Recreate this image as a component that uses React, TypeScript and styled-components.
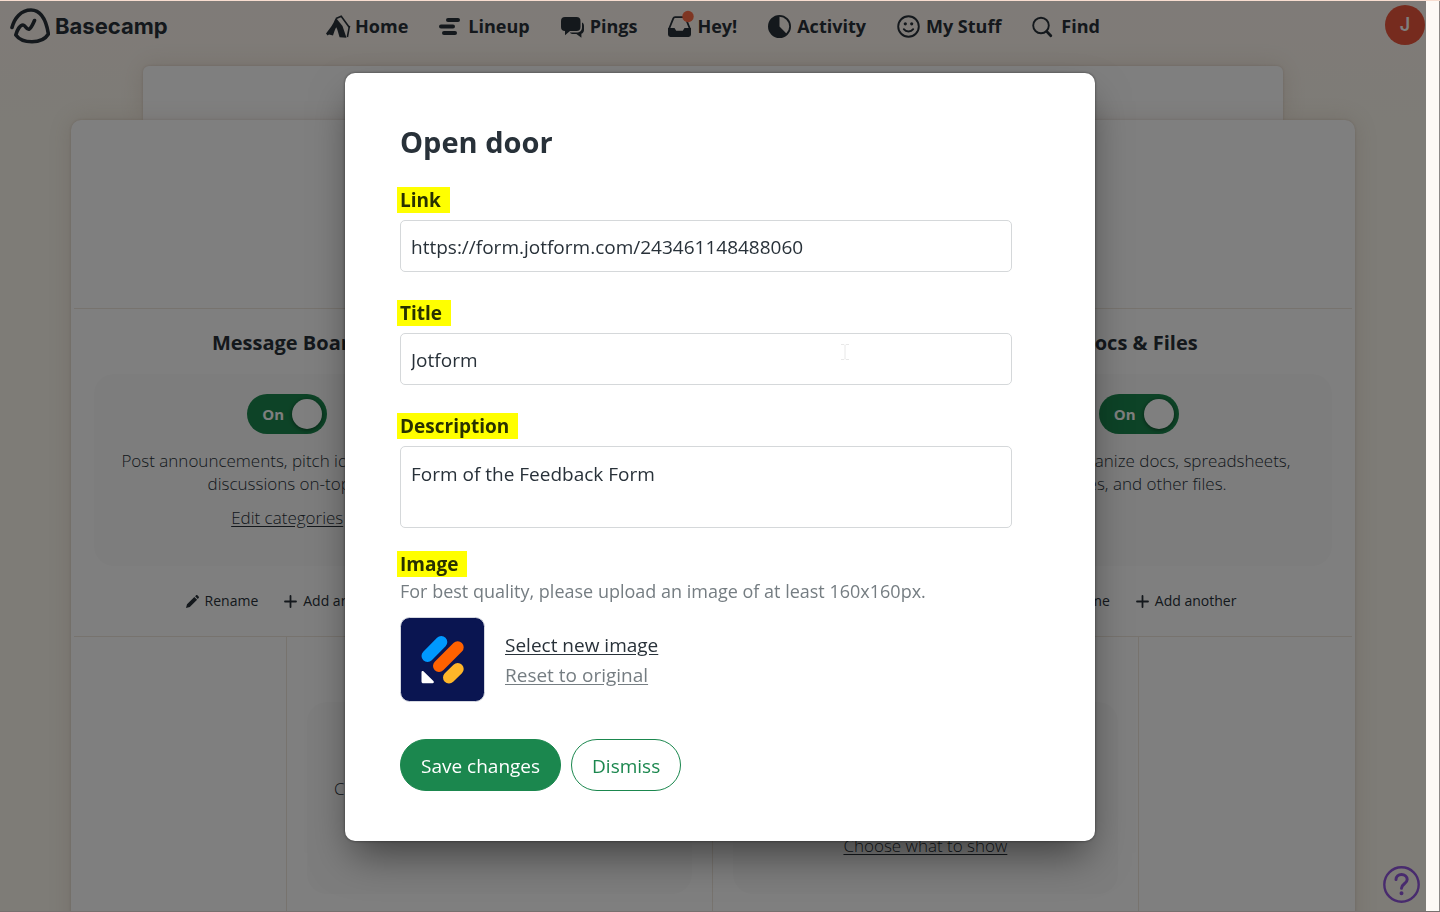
import React from "react";
import styled, { createGlobalStyle } from "styled-components";

const ink = "#283139";
const green = "#1b874e";
const rule = "#efe6dc";

const GlobalStyle = createGlobalStyle`
  *, *::before, *::after { box-sizing: border-box; }
  body {
    margin: 0;
    color: ${ink};
    font-family: "Open Sans", "Noto Sans", sans-serif;
  }
  button, input, textarea { font-family: inherit; color: inherit; }
  h1, h2, p { margin: 0; }
`;

const Shell = styled.div`
  display: grid;
  grid-template-columns: minmax(0, 1fr) 14px;
  height: 100vh;
  overflow: hidden;
  border-top: 1px solid #f8ddd0;
  border-bottom: 1px solid #77706f;
`;

const Gutter = styled.div`
  background: #fdf9f5;
  border-right: 1px solid #8c8886;
`;

const Page = styled.div`
  position: relative;
  display: flex;
  flex-direction: column;
  min-height: 0;
  overflow: hidden;
  background: linear-gradient(#fff6f0 0, #fcf8ee 120px);
`;

const Dim = styled.div`
  position: absolute;
  inset: 0;
  background: rgba(0, 0, 0, 0.5);
`;

const Header = styled.header`
  display: grid;
  grid-template-columns: 1fr auto 1fr;
  align-items: center;
  flex: none;
  height: 50px;
  padding: 0 1px;
`;

const Brand = styled.a`
  display: flex;
  align-items: center;
  gap: 5px;
  padding-left: 9px;
  color: inherit;
  font: 700 22px/28px Inter, sans-serif;
  text-decoration: none;
`;

const Nav = styled.nav`
  display: flex;
  gap: 31px;
`;

const NavLink = styled.a`
  display: flex;
  align-items: center;
  gap: 6px;
  color: inherit;
  font-size: 18px;
  font-weight: 700;
  line-height: 24px;
  text-decoration: none;
  svg { overflow: visible; }
`;

const Avatar = styled.button`
  justify-self: end;
  width: 40px;
  height: 40px;
  margin-bottom: 2px;
  padding: 0;
  border: 0;
  border-radius: 50%;
  background: #ed563c;
  color: #fff;
  font: 600 18px/40px Inter, sans-serif;
`;

const BackSheet = styled.div`
  flex: none;
  width: 80%;
  height: 54px;
  margin: 15px auto 0;
  border-radius: 6px 6px 0 0;
  background: #fff;
  box-shadow: 0 0 24px rgba(120, 80, 50, 0.14), 0 0 3px rgba(120, 80, 50, 0.2);
`;

const Sheet = styled.main`
  position: relative;
  flex: 1;
  width: 90%;
  margin: 0 auto;
  padding: 188px 3px 0;
  border-radius: 10px 10px 0 0;
  background: #fff;
  box-shadow: 0 0 24px rgba(120, 80, 50, 0.14), 0 0 3px rgba(120, 80, 50, 0.2);
`;

const ToolRow = styled.section`
  display: flex;
  justify-content: center;
  height: 328px;
  border-top: 1px solid ${rule};
`;

const Tool = styled.article<{ $ruled?: boolean }>`
  flex: 0 0 calc(100% / 3);
  padding: 20px 20px 0;
  border-right: ${p => (p.$ruled ? `1px solid ${rule}` : "0")};
  text-align: center;
  &:first-child { box-shadow: ${p => (p.$ruled ? `-1px 0 ${rule}` : "none")}; }
`;

const ToolTitle = styled.h2`
  height: 45px;
  font-size: 20px;
  line-height: 28px;
`;

const ToolCard = styled.div`
  display: flex;
  flex-direction: column;
  align-items: center;
  height: 192px;
  padding-top: 20px;
  border-radius: 20px;
  background: #fbfbfb;
`;

const Toggle = styled.label`
  display: flex;
  align-items: center;
  justify-content: space-between;
  flex: none;
  width: 80px;
  height: 40px;
  margin-bottom: 15px;
  padding: 0 5px 0 15px;
  border-radius: 20px;
  background: ${green};
  color: #fff;
  font-size: 15px;
  font-weight: 700;
  input {
    appearance: none;
    width: 30px;
    height: 30px;
    margin: 0;
    border-radius: 50%;
    background: #fff;
    box-shadow: 0 1px 4px rgba(0, 0, 0, 0.5);
  }
`;

const ToolText = styled.p`
  font-size: 17px;
  font-weight: 300;
  line-height: 23px;
  white-space: nowrap;
`;

const TextLink = styled.a`
  margin-top: 11px;
  color: inherit;
  font-size: 17px;
  font-weight: 300;
  line-height: 23px;
  text-underline-offset: 2px;
`;

const ToolActions = styled.div`
  display: flex;
  justify-content: center;
  gap: 26px;
  padding: 24px 4px 0 0;
`;

const ToolAction = styled.button`
  display: flex;
  align-items: center;
  gap: 6px;
  padding: 0;
  border: 0;
  background: none;
  font-size: 14px;
  line-height: 22px;
`;

const Help = styled.button`
  position: absolute;
  right: 6px;
  bottom: 8px;
  width: 37px;
  height: 37px;
  padding: 0;
  border: 0;
  border-radius: 50%;
  background: none;
`;

const ModalLayer = styled.div`
  position: fixed;
  inset: 0;
  display: flex;
  justify-content: center;
  align-items: flex-start;
  padding-top: 73px;
`;

const Modal = styled.form`
  width: 750px;
  max-width: 100%;
  padding: 55px 83px 50px 55px;
  border-radius: 10px;
  background: #fff;
  box-shadow: 0 0 3px rgba(0, 0, 0, 0.5), 0 20px 40px -8px rgba(0, 0, 0, 0.5);
`;

const ModalTitle = styled.h1`
  margin-bottom: 31px;
  font-size: 29px;
  line-height: 28px;
`;

const Field = styled.div`
  position: relative;
  margin-bottom: 28px;
`;

const FieldLabel = styled.label`
  display: block;
  width: fit-content;
  margin: 0 0 7px -3px;
  padding: 0 9px 0 3px;
  background: #ff0;
  color: #283100;
  font-size: 19px;
  font-weight: 700;
  line-height: 26px;
`;

const TextInput = styled.input`
  display: block;
  width: 100%;
  height: 52px;
  padding: 2px 10px 0;
  border: 1px solid #d5d8da;
  border-radius: 5px;
  background: #fff;
  font-size: 19px;
`;

const TextArea = styled.textarea`
  display: block;
  width: 100%;
  height: 82px;
  padding: 12px 10px;
  border: 1px solid #d5d8da;
  border-radius: 5px;
  background: #fff;
  font-size: 19px;
  line-height: 30px;
  resize: none;
`;

const Pointer = styled.svg`
  position: absolute;
  top: 44px;
  left: 72%;
`;

const ImageBlock = styled.div`
  margin-top: -5px;
  ${FieldLabel} { margin-bottom: 0; }
`;

const Hint = styled.p`
  color: #757d82;
  font-size: 18px;
  line-height: 28px;
`;

const ImageRow = styled.div`
  display: flex;
  align-items: center;
  gap: 20px;
  margin: 12px 0 37px;
`;

const ImageLinks = styled.div`
  display: flex;
  flex-direction: column;
  align-items: flex-start;
`;

const LinkButton = styled.button<{ $muted?: boolean }>`
  padding: 0;
  border: 0;
  background: none;
  color: ${p => (p.$muted ? "#757d82" : ink)};
  font-size: 19px;
  line-height: 30px;
  text-decoration: underline;
  text-underline-offset: 2px;
`;

const Buttons = styled.div`
  display: flex;
  gap: 10px;
`;

const Pill = styled.button<{ $primary?: boolean }>`
  height: 52px;
  padding: 1px 20px 0;
  border: 1px solid ${green};
  border-radius: 26px;
  background: ${p => (p.$primary ? green : "#fff")};
  color: ${p => (p.$primary ? "#fff" : green)};
  font-size: 19px;
`;

const BasecampLogo = () => (
  <svg width="40" height="36" viewBox="10 8 40 36" fill="none" stroke={ink} strokeWidth="3.6" strokeLinecap="round" strokeLinejoin="round">
    <path d="M12 27.5C14.5 18 21 10 31 10C41 10 46 19 48.4 34C45 39.5 39 41.8 32 41.8C25 41.8 19 39.5 15.8 35C17 30 20 25 23 25C25.5 25 26 29.8 29 29.2C31 28.6 33 24 34.5 20.5" />
  </svg>
);

const icons = {
  home: (
    <>
      <path d="M10 3.5L15.2 1.3L23.2 12.3L21.4 22" fill="none" stroke={ink} strokeWidth="1.6" />
      <path d="M22.6 12l1.6-.6" stroke={ink} strokeWidth="1.4" />
      <path d="M10 3L16.5 11L20.5 22.8L13.6 22.2C12.6 19 11.6 14.5 10.2 12.2C9 14 8 17.5 7 20.4L3 19.4L1.6 20.6L0 18.4C3.5 14 7.5 9 9.2 4Z" fill={ink} />
    </>
  ),
  lineup: (
    <g fill={ink}>
      <rect x="7" y="3" width="14" height="4" rx="2" />
      <rect x="0" y="9.5" width="16" height="4" rx="2" />
      <rect x="3" y="16" width="15" height="4" rx="2" />
    </g>
  ),
  pings: (
    <g fill={ink}>
      <path d="M4 2h11.5a4 4 0 0 1 4 4v6a4 4 0 0 1-4 4H9l-5 4.2V16a4 4 0 0 1-4-4V6a4 4 0 0 1 4-4z" />
      <path d="M21 7.5c1.300.5 2 1.700 2 3.500v4c0 1.900-1 3.200-2.600 3.700v4l-5-3.600h-2.400c-2 0-3.500-.5-4.200-1.700h6.700c3.400 0 5.500-2 5.500-5z" />
    </g>
  ),
  hey: (
    <>
      <path d="M1 14L5.3 3.4Q5.8 2.2 7 2.2H16Q17.2 2.2 17.7 3.4L22 14" fill="none" stroke={ink} strokeWidth="1.8" />
      <path d="M0 13h6.500l1.700 2.800h6.600l1.700-2.800H23v6.600a2.400 2.400 0 0 1-2.400 2.400H2.400A2.400 2.400 0 0 1 0 19.600z" fill={ink} />
      <circle cx="20" cy="1.5" r="5.7" fill="#ff6c46" />
    </>
  ),
  activity: (
    <>
      <circle cx="11.5" cy="11.5" r="10.6" fill="none" stroke={ink} strokeWidth="1.8" />
      <path d="M11.5 1v10.500l7.400 7.400A10.500 10.500 0 1 1 11.500 1z" fill={ink} />
    </>
  ),
  smile: (
    <>
      <circle cx="11.5" cy="11.5" r="10.3" fill="none" stroke={ink} strokeWidth="1.9" />
      <circle cx="8.3" cy="8.8" r="1.6" fill={ink} />
      <circle cx="14.7" cy="8.8" r="1.6" fill={ink} />
      <path d="M6.8 14.2c2.300 3 7.100 3 9.400 0" fill="none" stroke={ink} strokeWidth="1.9" strokeLinecap="round" />
    </>
  ),
  find: (
    <g fill="none" stroke={ink}>
      <circle cx="9" cy="10.5" r="7.8" strokeWidth="1.9" />
      <path d="M14.6 16.4l4.200 4.400" strokeWidth="2.8" strokeLinecap="round" />
    </g>
  ),
};

const navItems: { label: string; icon: keyof typeof icons }[] = [
  { label: "Home", icon: "home" },
  { label: "Lineup", icon: "lineup" },
  { label: "Pings", icon: "pings" },
  { label: "Hey!", icon: "hey" },
  { label: "Activity", icon: "activity" },
  { label: "My Stuff", icon: "smile" },
  { label: "Find", icon: "find" },
];

const JotformTile = () => (
  <svg width="85" height="85" viewBox="0 0 85 85" role="img" aria-label="Jotform">
    <rect x="0.5" y="0.5" width="84" height="84" rx="9" fill="#0a1551" stroke="#d5d8e0" />
    <g strokeWidth="12" strokeLinecap="round">
      <path d="M27.5 39L41.3 25" stroke="#0099ff" />
      <path d="M39 49L57.7 30.2" stroke="#ff6100" />
      <path d="M49 60.6L57.7 52" stroke="#ffb629" />
    </g>
    <path d="M21.5 55.200c0-1.300 1.300-1.700 2.200-.8l9.700 9.600c.9.900.4 2.200-.8 2.200h-9.300c-1 0-1.800-.8-1.800-1.800z" fill="#fff" />
  </svg>
);

const Pencil = () => (
  <svg width="13" height="13" viewBox="0 0 13 13" fill={ink}>
    <path d="M0 13l1-3.800L8.300 2l2.800 2.800L3.800 12zM9.100 1.200l.8-.8c.5-.5 1.200-.5 1.700 0l1 1c.5.500.5 1.200 0 1.700l-.8.800z" />
  </svg>
);

const Plus = () => (
  <svg width="13" height="13" viewBox="0 0 13 13" stroke={ink} strokeWidth="1.8" strokeLinecap="round">
    <path d="M6.5 1v11M1 6.500h11" />
  </svg>
);

type ToolProps = {
  title?: string;
  lines: string[];
  link?: string;
  ruled?: boolean;
  actions?: boolean;
};

const ToolPanel = ({ title, lines, link, ruled, actions }: ToolProps) => (
  <Tool $ruled={ruled}>
    <ToolTitle>{title}</ToolTitle>
    <ToolCard>
      <Toggle>
        On
        <input type="checkbox" defaultChecked />
      </Toggle>
      {lines.map(line => (
        <ToolText key={line}>{line}</ToolText>
      ))}
      {link && <TextLink href="#">{link}</TextLink>}
    </ToolCard>
    {actions && (
      <ToolActions>
        <ToolAction type="button"><Pencil />Rename</ToolAction>
        <ToolAction type="button"><Plus />Add another</ToolAction>
      </ToolActions>
    )}
  </Tool>
);

export default function App() {
  return (
    <>
      <GlobalStyle />
      <Shell>
        <Page>
          <Header>
            <Brand href="#"><BasecampLogo />Basecamp</Brand>
            <Nav>
              {navItems.map(({ label, icon }) => (
                <NavLink href="#" key={label}>
                  <svg width="23" height="23" viewBox="0 0 23 23">{icons[icon]}</svg>
                  {label}
                </NavLink>
              ))}
            </Nav>
            <Avatar type="button">J</Avatar>
          </Header>
          <BackSheet />
          <Sheet>
            <ToolRow>
              <ToolPanel
                title="Message Board"
                lines={["Post announcements, pitch ideas, and keep", "discussions on-topic."]}
                link="Edit categories"
                actions
              />
              <Tool />
              <ToolPanel
                title="Docs & Files"
                lines={["Share and organize docs, spreadsheets,", "images, and other files."]}
                actions
              />
            </ToolRow>
            <ToolRow>
              <ToolPanel ruled lines={["Chat casually with the group, ask questions,", "and share stuff."]} />
              <ToolPanel ruled lines={["Set important dates on a", "shared schedule."]} link="Choose what to show" />
            </ToolRow>
          </Sheet>
          <Help type="button" aria-label="Help">
            <svg width="37" height="37" viewBox="0 0 37 37" fill="none" stroke="#9156dc" strokeWidth="2.4" strokeLinecap="round">
              <circle cx="18.5" cy="18.5" r="17.2" />
              <path d="M13 13.500c0-3.200 2.500-5 5.500-5s5.700 1.800 5.700 5c0 4.300-5.700 4.300-5.700 8.700" strokeWidth="3" />
              <circle cx="18.5" cy="27.2" r="1" strokeWidth="2" />
            </svg>
          </Help>
          <Dim />
        </Page>
        <Gutter />
      </Shell>
      <ModalLayer>
        <Modal onSubmit={e => e.preventDefault()}>
          <ModalTitle>Open door</ModalTitle>
          <Field>
            <FieldLabel htmlFor="link">Link</FieldLabel>
            <TextInput id="link" defaultValue="https://form.jotform.com/243461148488060" />
          </Field>
          <Field>
            <FieldLabel htmlFor="title">Title</FieldLabel>
            <TextInput id="title" defaultValue="Jotform" />
            <Pointer width="8" height="16" viewBox="0 0 8 16" fill="none" stroke="#e8e8e8">
              <path d="M0 .5h3l1 1 1-1h3M4 1.500v13M0 15.500h3l1-1 1 1h3" />
            </Pointer>
          </Field>
          <Field>
            <FieldLabel htmlFor="description">Description</FieldLabel>
            <TextArea id="description" defaultValue="Form of the Feedback Form" />
          </Field>
          <ImageBlock>
            <FieldLabel htmlFor="select-image">Image</FieldLabel>
            <Hint>For best quality, please upload an image of at least 160x160px.</Hint>
            <ImageRow>
              <JotformTile />
              <ImageLinks>
                <LinkButton type="button" id="select-image">Select new image</LinkButton>
                <LinkButton type="button" $muted>Reset to original</LinkButton>
              </ImageLinks>
            </ImageRow>
          </ImageBlock>
          <Buttons>
            <Pill type="submit" $primary>Save changes</Pill>
            <Pill type="button">Dismiss</Pill>
          </Buttons>
        </Modal>
      </ModalLayer>
    </>
  );
}
